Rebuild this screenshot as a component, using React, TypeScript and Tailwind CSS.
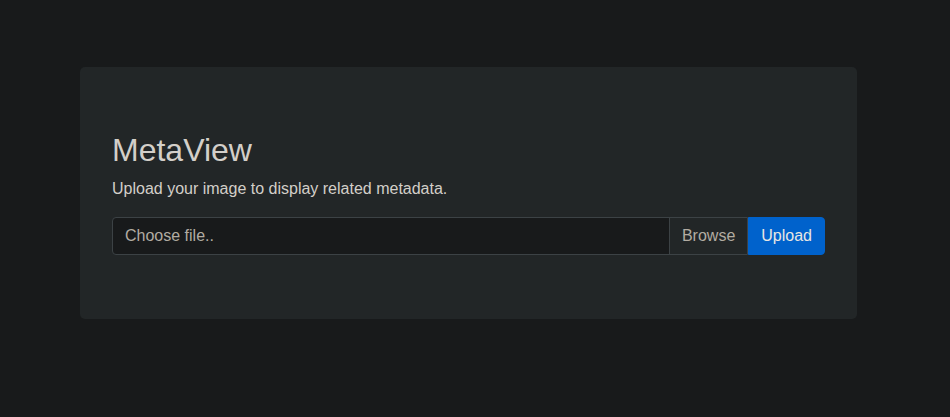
import React from "react";

export default function App() {
  return (
    <div className="min-h-[417px] w-full bg-[#181a1b] pt-[67px] font-['Liberation_Sans',Arial,sans-serif]">
      <div className="ml-[80px] w-[777px] rounded-[5px] bg-[#222627] px-[32px] py-[64px]">
        <h1 className="mb-[8px] text-[32px] leading-[38.4px] font-normal text-[#d3cfc9]">MetaView</h1>
        <p className="mb-[16px] text-[16px] leading-[24px] text-[#d3cfc9]">
          Upload your image to display related metadata.
        </p>
        <div className="flex h-[38px] w-[713px]">
          <div className="flex flex-1 overflow-hidden rounded-l-[4px] border border-[#3c4245] bg-[#181a1b]">
            <div className="flex-1 px-[12px] py-[6px] text-[16px] leading-[24px] text-[#b2aca2]">Choose file..</div>
            <div className="border-l border-[#3c4245] bg-[#222627] px-[12px] py-[6px] text-[16px] leading-[24px] text-[#b2aca2]">
              Browse
            </div>
          </div>
          <button className="rounded-r-[4px] border border-[#0062cc] bg-[#0062cc] px-[12px] py-[6px] text-[16px] leading-[24px] text-[#e8e6e3]">
            Upload
          </button>
        </div>
      </div>
    </div>
  );
}
